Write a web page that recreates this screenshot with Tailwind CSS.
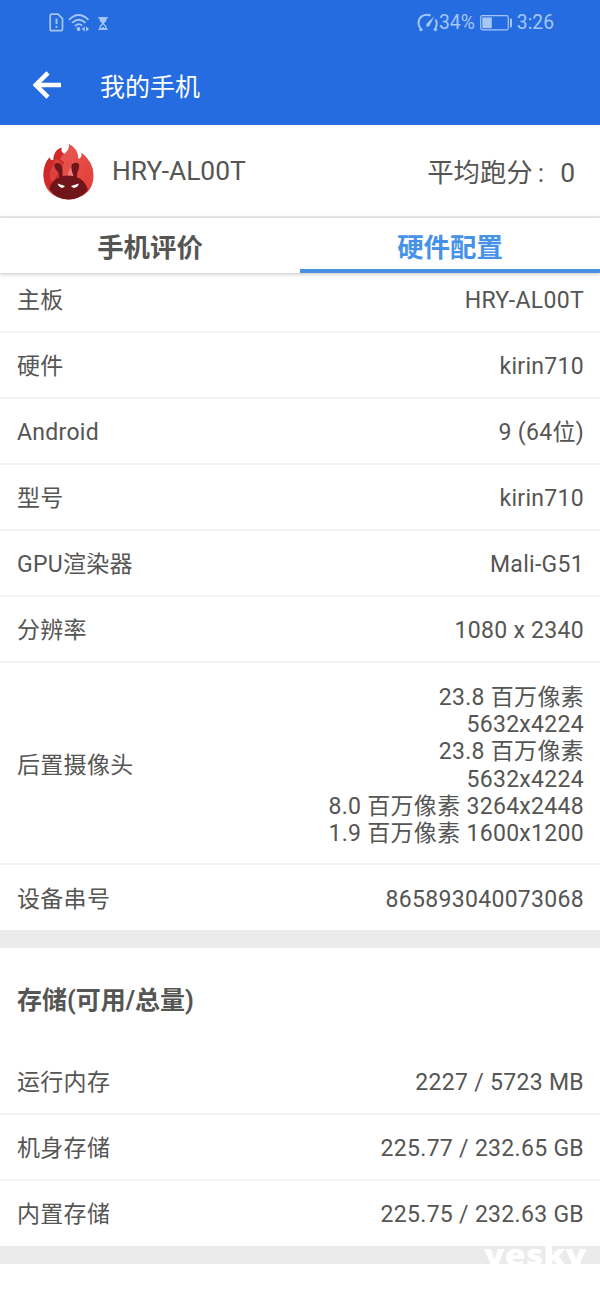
<!DOCTYPE html>
<html lang="zh-CN">
<head>
    <meta charset="UTF-8">
    <meta name="viewport" content="width=device-width, initial-scale=1.0">
    <title>我的手机</title>
    <script src="https://cdn.jsdelivr.net/npm/@tailwindcss/browser@4"></script>
</head>
<body class="bg-white font-['Roboto','Noto_Sans_CJK_SC',sans-serif] text-[#555553]">
    <div class="flex h-[1300px] w-[600px] flex-col overflow-hidden">

        <header class="h-[125px] shrink-0 bg-[#256ce0]">
            <!-- Status bar -->
            <div class="flex h-[45px] items-center justify-between pr-[46px] pl-[49px] text-[#a6c6f7]">
                <div class="flex items-center">
                    <svg class="h-[19px] w-[15px]" viewBox="0 0 15 19" fill="none" stroke="currentColor" stroke-width="1.7">
                        <path d="M2.5 1.2H9L13.5 5.7V16.3Q13.5 17.7 12.1 17.7H2.6Q1.2 17.7 1.2 16.3V2.6Q1.2 1.2 2.5 1.2Z"/>
                        <path d="M7.5 5.5V11M7.5 12.8V14.8" stroke-width="1.9"/>
                    </svg>
                    <svg class="ml-[4px] h-[19px] w-[22px]" viewBox="0 0 22 19" fill="none" stroke="currentColor" stroke-width="1.8">
                        <path d="M1 6.8Q10.5 -2.8 20.5 6.8M4 9.9Q10.5 3.5 17.5 9.9M7 13Q10.5 9.5 14.2 12.7"/>
                        <circle cx="10.5" cy="16" r="1.9" fill="currentColor" stroke="none"/>
                        <path d="M16.8 13.5V18.5L13.8 16ZM18 13.5V18.5L21 16Z" fill="currentColor" stroke="none"/>
                    </svg>
                    <svg class="mt-px ml-[8px] h-[13px] w-[10px]" viewBox="0 0 10 14" fill="currentColor">
                        <path d="M0 0H10V1.5H9Q9 5 6 7Q9 9 9 12.5H10V14H0V12.5H1Q1 9 4 7Q1 5 1 1.5H0ZM5 8Q2.5 9.5 2.3 12H3.2L5 10.5L6.8 12H7.7Q7.5 9.5 5 8Z" fill-rule="evenodd"/>
                    </svg>
                </div>
                <div class="flex items-center">
                    <svg class="h-[20px] w-[22px]" viewBox="0 0 22 20" fill="none" stroke="currentColor" stroke-width="2">
                        <path d="M5.3 17.3Q1.5 14 1.5 9.5Q2 5 5 3.2Q9 .5 13.5 2.5M18.8 6.5Q21.3 13 17 17.3M2.5 16.2L4.5 17.7M20 16.2L17.5 17.5"/>
                        <path d="M17.3 3.2L12.7 12.5Q11 14.5 9.6 13.2Q8.5 11.7 10 10.3Z" fill="currentColor" stroke="none"/>
                    </svg>
                    <span class="mt-[2px] text-[19.3px]">34%</span>
                    <svg class="ml-[5px] h-[16px] w-[33px]" viewBox="0 0 33 16" fill="currentColor">
                        <rect x=".7" y=".7" width="27.6" height="14.2" rx="1.8" fill="none" stroke="currentColor" stroke-width="1.2"/>
                        <rect x="2.3" y="2.4" width="9.5" height="10.8"/>
                        <rect x="30" y="3.5" width="2" height="9" rx="1"/>
                    </svg>
                    <span class="mt-[2px] ml-[4px] text-[19.3px]">3:26</span>
                </div>
            </div>
            <!-- Title bar -->
            <div class="flex h-20 items-center pl-[33px] text-white">
                <svg class="h-[28px] w-[28px]" viewBox="0 0 28 28" fill="none" stroke="currentColor" stroke-width="4.5">
                    <path d="M28 14H3M15 1.8L2.8 14L15 26.2"/>
                </svg>
                <h1 class="mt-[5px] ml-[39px] text-[25px]">我的手机</h1>
            </div>
        </header>

        <!-- Device summary -->
        <div class="flex h-[93px] shrink-0 items-center border-b-2 border-[#ebebeb] pr-[25px] pl-[43px] text-[26.4px]">
            <svg class="mt-[2px] h-[56px] w-[51px]" viewBox="0 0 51 56">
                <defs>
                    <linearGradient id="flame" x1="0" x2="1" y1="0" y2="1">
                        <stop offset="0" stop-color="#e9605a"/>
                        <stop offset="1" stop-color="#e33a35"/>
                    </linearGradient>
                </defs>
                <path d="M6.5 13.5Q7.5 17 10.5 16Q10 7 18.5 3.5Q17.5 8 21 10Q26.5 6 26 0Q35 4 35.5 15Q39 14 38.5 8.5Q50.5 18 50.5 31Q50.5 46 39 52Q25 59 12 52Q.5 46 .5 31Q.5 20 6.5 13.5Z" fill="url(#flame)"/>
                <path d="M6.5 13.5Q7.5 17 10.5 16Q10 7 18.5 3.5Q17.5 8 21 10Q18 12 17 15L21 18L16 36L6 45Q.5 39 .5 31Q.5 20 6.5 13.5Z" fill="#cf2a29"/>
                <path d="M13 15Q20 18 20 23L15 30L10 38Q2 35 13 15Z" fill="#dc403c"/>
                <path d="M30 18L24 32H34Z" fill="#f08078"/>
                <path d="M6 45Q9 36 16.5 33.2Q16.5 29 12.5 25Q9.500 19 14 19Q20.5 18.5 19.5 32Q25 31 30.5 32Q26 20 30.5 19Q37.500 18 36 24Q33.500 29 34 33.2Q42 36 45 46Q37 55.5 25.5 55.5Q13 55.5 6 45Z" fill="#701519"/>
                <path d="M14.500 39.5L22 42Q20.5 44 18.5 44Q15.5 43 14.5 39.5ZM36 39.5L28 42Q29.5 44 31.5 44Q35 43 36 39.5Z" fill="#fff"/>
            </svg>
            <span class="mt-[2px] ml-[18px] text-[26.4px]">HRY-AL00T</span>
            <span class="mt-[6px] ml-auto">平均跑分<span class="mr-[16px] ml-[5px]">:</span>0</span>
        </div>

        <!-- Tabs -->
        <nav class="relative z-10 flex h-[55px] shrink-0 bg-white text-[26.4px] font-bold shadow-[0_1px_4px_rgba(0,0,0,0.25)]">
            <div class="flex flex-1 items-center justify-center pt-[7px]">手机评价</div>
            <div class="flex flex-1 items-center justify-center border-b-4 border-[#4a90e2] pt-[11px] text-[#4692e8]">硬件配置</div>
        </nav>

        <!-- Hardware, scrolled a little under the tabs -->
        <section class="-mt-[6px] shrink-0 text-[23px] leading-[27.2px] tracking-[0.3px]">
            <div class="flex h-[66px] items-center justify-between border-b-2 border-[#f3f3f3] pr-[16px] pl-[17px] pt-[4px]"><span>主板</span><span>HRY-AL00T</span></div>
            <div class="flex h-[66px] items-center justify-between border-b-2 border-[#f3f3f3] pr-[16px] pl-[17px] pt-[4px]"><span>硬件</span><span>kirin710</span></div>
            <div class="flex h-[66px] items-center justify-between border-b-2 border-[#f3f3f3] pr-[16px] pl-[17px] pt-[4px]"><span>Android</span><span>9 (64位)</span></div>
            <div class="flex h-[66px] items-center justify-between border-b-2 border-[#f3f3f3] pr-[16px] pl-[17px] pt-[4px]"><span>型号</span><span>kirin710</span></div>
            <div class="flex h-[66px] items-center justify-between border-b-2 border-[#f3f3f3] pr-[16px] pl-[17px] pt-[4px]"><span>GPU渲染器</span><span>Mali-G51</span></div>
            <div class="flex h-[66px] items-center justify-between border-b-2 border-[#f3f3f3] pr-[16px] pl-[17px] pt-[4px]"><span>分辨率</span><span>1080 x 2340</span></div>
            <div class="flex h-[202px] items-center justify-between border-b-2 border-[#f3f3f3] pr-[16px] pl-[17px] pt-[5px]">
                <span>后置摄像头</span>
                <span class="text-right">23.8 百万像素<br>5632x4224<br>23.8 百万像素<br>5632x4224<br>8.0 百万像素 3264x2448<br>1.9 百万像素 1600x1200</span>
            </div>
            <div class="flex h-[65px] items-center justify-between pr-[16px] pl-[17px] pt-[4px]"><span>设备串号</span><span>865893040073068</span></div>
        </section>

        <div class="h-[18px] shrink-0 bg-[#ebebeb]"></div>

        <!-- Storage -->
        <section class="shrink-0 text-[23px] leading-[27.2px] tracking-[0.3px]">
            <h2 class="flex h-[101px] items-center px-[17px] pt-[5px] text-[25px] font-bold tracking-normal">存储(可用/总量)</h2>
            <div class="flex h-[66px] items-center justify-between border-b-2 border-[#f3f3f3] pr-[16px] pl-[17px] pt-[4px]"><span>运行内存</span><span>2227 / 5723 MB</span></div>
            <div class="flex h-[66px] items-center justify-between border-b-2 border-[#f3f3f3] pr-[16px] pl-[17px] pt-[4px]"><span>机身存储</span><span>225.77 / 232.65 GB</span></div>
            <div class="flex h-[65px] items-center justify-between pr-[16px] pl-[17px] pt-[3px]"><span>内置存储</span><span>225.75 / 232.63 GB</span></div>
        </section>

        <div class="relative h-[18px] shrink-0 bg-[#ebebeb]">
            <span class="absolute -top-[10px] left-[484px] origin-left scale-x-[1.13] font-['Open_Sans',sans-serif] text-[30px] leading-[38px] font-extrabold text-white">yesky</span>
        </div>
    </div>
</body>
</html>
